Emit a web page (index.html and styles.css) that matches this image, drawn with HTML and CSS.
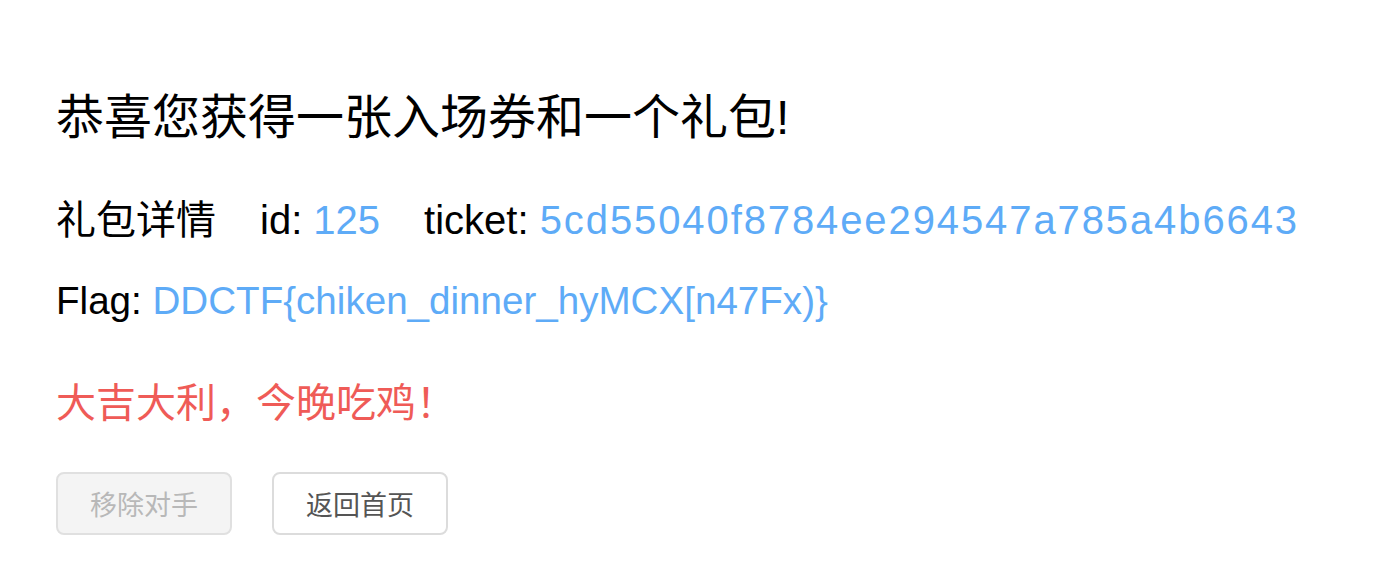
FILE: index.html
```html
<!DOCTYPE html>
<html lang="zh-CN">
<head>
<meta charset="utf-8">
<title>礼包</title>
<link rel="stylesheet" href="styles.css">
</head>
<body>
<div class="page">
  <h2 class="title">恭喜您获得一张入场券和一个礼包!</h2>
  <div class="row detail">
    <span class="label">礼包详情</span>
    <span class="item">id: <span class="val">125</span></span>
    <span class="item">ticket: <span class="val hash">5cd55040f8784ee294547a785a4b6643</span></span>
  </div>
  <div class="row flag">Flag: <span class="val">DDCTF{chiken_dinner_hyMCX[n47Fx)}</span></div>
  <div class="lucky">大吉大利，今晚吃鸡！</div>
  <div class="actions">
    <button class="btn disabled" disabled>移除对手</button>
    <button class="btn">返回首页</button>
  </div>
</div>
</body>
</html>
```
FILE: styles.css
```css
html, body {
  margin: 0;
  padding: 0;
  background: #ffffff;
}
body {
  font-family: "Liberation Sans", "Noto Sans CJK SC", sans-serif;
  color: #000;
}
.page {
  padding: 90px 0 0 56px;
}
.title {
  margin: 0;
  font-size: 48px;
  font-weight: normal;
  line-height: 56px;
}
.row {
  font-size: 40px;
  line-height: 48px;
  white-space: nowrap;
}
.detail {
  margin-top: 50px;
  display: flex;
}
.item {
  margin-left: 44px;
}
.hash {
  letter-spacing: 1.9px;
}
.val {
  color: #5eabf7;
}
.flag {
  margin-top: 33px;
  font-size: 38.6px;
}
.lucky {
  margin-top: 54px;
  font-size: 40px;
  line-height: 48px;
  color: #ef5b57;
}
.actions {
  margin-top: 45px;
  display: flex;
  gap: 40px;
}
.btn {
  width: 176px;
  height: 63px;
  border: 2px solid #dcdcdc;
  border-radius: 8px;
  background: #fff;
  color: #555;
  font-family: "Liberation Sans", "Noto Sans CJK SC", sans-serif;
  font-size: 27px;
  padding: 0;
}
.btn.disabled {
  background: #f4f4f4;
  color: #b8b8b8;
  border-color: #e0e0e0;
}
```
